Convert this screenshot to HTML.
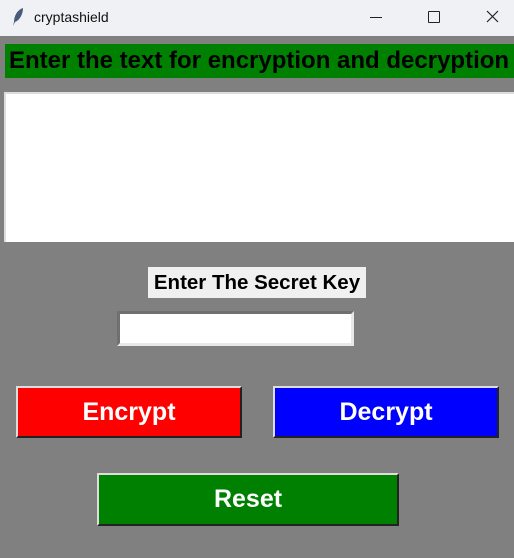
<!DOCTYPE html>
<html><head><style>
html,body{margin:0;width:514px;height:558px;overflow:hidden}
body{background:#808080;font-family:"Liberation Sans",Arial,sans-serif;position:relative}
.tb{position:absolute;left:0;top:0;width:514px;height:36px;background:#f0f1f4;font-size:14px}
.abs{position:absolute}
.btn{position:absolute;color:#fff;font-weight:bold;font-size:25px;display:flex;align-items:center;justify-content:center;box-sizing:border-box;border:2px solid;border-color:#ddd #222 #222 #ddd}
</style></head><body>
<div class="tb">
<svg class="abs" style="left:11px;top:7px" width="14" height="20" viewBox="0 0 14 20"><path d="M12 1 C6 3 3 9 3 15 L2 19 L4 15 C9 13 12 7 12 1Z" fill="#4a5a7a"/></svg>
<span class="abs" style="left:34px;top:9px;color:#111">cryptashield</span>
<div class="abs" style="left:370px;top:17px;width:12px;height:1px;background:#222"></div>
<div class="abs" style="left:428px;top:11px;width:10px;height:10px;border:1px solid #222;border-radius:1px"></div>
<svg class="abs" style="left:486px;top:10px" width="13" height="13"><path d="M1 1L12 12M12 1L1 12" stroke="#222" stroke-width="1.2"/></svg>
</div>
<div class="abs" style="left:5px;top:44px;width:520px;height:34px;background:#008000"></div>
<div class="abs" style="left:9px;top:44px;height:34px;font-weight:bold;font-size:24px;line-height:34px;white-space:nowrap;color:#000">Enter the text for encryption and decryption</div>
<div class="abs" style="left:4px;top:92px;width:510px;height:150px;background:#fff;border-top:2px solid #ddd;border-left:2px solid #ddd;box-sizing:border-box"></div>
<div class="abs" style="left:148px;top:267px;width:218px;height:31px;background:#f0f0f0;font-weight:bold;font-size:20.5px;line-height:31px;text-align:center;color:#000;white-space:nowrap">Enter The Secret Key</div>
<div class="abs" style="left:117px;top:311px;width:237px;height:35px;background:#fff;box-sizing:border-box;border:3px solid;border-color:#707070 #e8e8e8 #e8e8e8 #707070"></div>
<div class="btn" style="left:16px;top:386px;width:226px;height:52px;background:#f00">Encrypt</div>
<div class="btn" style="left:273px;top:386px;width:226px;height:52px;background:#00f">Decrypt</div>
<div class="btn" style="left:97px;top:473px;width:302px;height:53px;background:#008000">Reset</div>
</body></html>
